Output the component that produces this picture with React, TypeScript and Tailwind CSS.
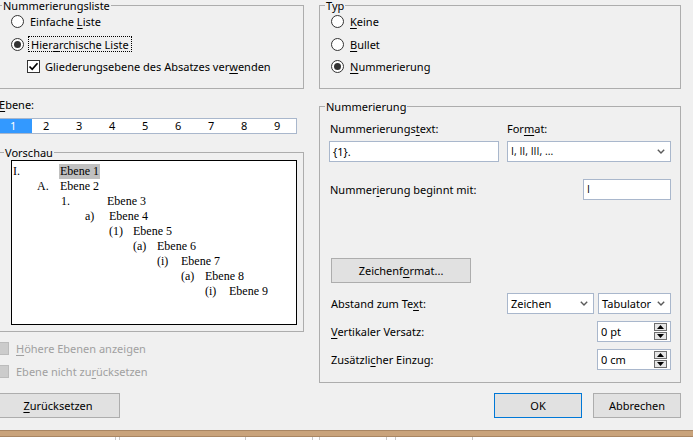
import React from "react";

function U({ children }: { children: React.ReactNode }) {
  return <span className="underline underline-offset-[2px]">{children}</span>;
}

function Radio({ checked }: { checked?: boolean }) {
  return (
    <span className="w-[13px] h-[13px] shrink-0 rounded-full border border-[#333333] bg-white flex items-center justify-center">
      {checked && <span className="w-[7px] h-[7px] rounded-full bg-[#333333]" />}
    </span>
  );
}

function Check({ checked, disabled }: { checked?: boolean; disabled?: boolean }) {
  if (disabled) {
    return <span className="w-[13px] h-[13px] shrink-0 border border-[#bcbcbc] bg-[#cccccc]" />;
  }
  return (
    <span className="w-[13px] h-[13px] shrink-0 border border-[#333333] bg-white flex items-center justify-center">
      {checked && (
        <svg width="11" height="11" viewBox="0 0 11 11">
          <path d="M1.5 5.5 L4.2 8.3 L9.5 2.2" stroke="#000" strokeWidth="1.7" fill="none" />
        </svg>
      )}
    </span>
  );
}

function Chevron() {
  return (
    <svg width="8" height="5" viewBox="0 0 8 5">
      <path d="M0.8 0.8 L4 4 L7.2 0.8" stroke="#5a5a5a" strokeWidth="1.4" fill="none" />
    </svg>
  );
}

function Select({ value, width, roman }: { value: string; width: string; roman?: boolean }) {
  return (
    <div className={`${width} h-[21px] border border-[#a9b7cc] bg-white flex items-center justify-between pl-[3px] pr-[5px]`}>
      <span className={roman ? "font-['Open_Sans',sans-serif] text-[10.5px]" : ""}>{value}</span>
      <Chevron />
    </div>
  );
}

function SpinBtn({ up }: { up?: boolean }) {
  return (
    <span className="w-[13px] h-[8px] border border-[#6e6e6e] bg-[#e6e6e6] flex items-center justify-center">
      <svg width="7" height="4" viewBox="0 0 7 4">
        <path d={up ? "M0 4 L3.5 0 L7 4 Z" : "M0 0 L3.5 4 L7 0 Z"} fill="#000" />
      </svg>
    </span>
  );
}

function Spin({ value }: { value: string }) {
  return (
    <div className="w-[74px] h-[21px] border border-[#a9b7cc] bg-white flex items-center justify-between pl-[3px] pr-[3px]">
      <span>{value}</span>
      <span className="flex flex-col gap-[1px]">
        <SpinBtn up />
        <SpinBtn />
      </span>
    </div>
  );
}

const previewRows = [
  { n: "I.", num: "pl-[1px] w-[48px]", hl: true },
  { n: "A.", num: "pl-[25px] w-[48px]" },
  { n: "1.", num: "pl-[49px] w-[95px]" },
  { n: "a)", num: "pl-[73px] w-[97px]" },
  { n: "(1)", num: "pl-[97px] w-[121px]" },
  { n: "(a)", num: "pl-[121px] w-[145px]" },
  { n: "(i)", num: "pl-[145px] w-[169px]" },
  { n: "(a)", num: "pl-[169px] w-[193px]" },
  { n: "(i)", num: "pl-[193px] w-[217px]" },
];

export default function App() {
  return (
    <div className="w-[693px] h-[440px] overflow-hidden bg-[#f0f0f0] flex flex-col text-[11px] leading-[15px] text-black font-['Noto_Sans',sans-serif]">
      <div className="h-[430px] overflow-hidden">
        <div className="-ml-[4px] -mt-[1px] w-[697px] flex gap-[15px]">
          {/* left column */}
          <div className="w-[308px] flex flex-col">
            <fieldset className="h-[90px] border border-[#adadad]">
              <legend className="ml-[5px] px-[1px] leading-[13px]">Nummerierungsliste</legend>
              <div className="flex flex-col pl-[14px]">
                <div className="mt-[1px] h-[16px] flex items-center gap-[6px]">
                  <Radio />
                  <span>
                    Einfache <U>L</U>iste
                  </span>
                </div>
                <div className="mt-[7px] h-[16px] flex items-center gap-[4px]">
                  <Radio checked />
                  <span className="h-[16px] border border-dotted border-black px-[2px] flex items-center">
                    Hier<U>a</U>rchische Liste
                  </span>
                </div>
                <div className="mt-[6px] h-[16px] flex items-center gap-[5px] pl-[16px]">
                  <Check checked />
                  <span>
                    Gliederungsebene des Absatzes ver<U>w</U>enden
                  </span>
                </div>
              </div>
            </fieldset>

            <div className="mt-[8px] ml-[3px] h-[15px]">
              <U>E</U>bene:
            </div>
            <div className="mt-[6px] ml-[2px] w-[299px] h-[16px] border border-[#a9b7cc] bg-white flex">
              {["1", "2", "3", "4", "5", "6", "7", "8", "9"].map((d, i) => (
                <span
                  key={d}
                  className={
                    i === 0
                      ? "w-[33px] h-full pl-[11px] leading-[14px] bg-[#3399ff] text-white"
                      : "w-[33px] h-full pl-[11px] leading-[14px]"
                  }
                >
                  {d}
                </span>
              ))}
            </div>

            <fieldset className="mt-[12px] h-[186px] border border-[#adadad]">
              <legend className="ml-[7px] px-[1px] leading-[13px]">Vorschau</legend>
              <div className="mt-[1px] ml-[14px] w-[286px] h-[165px] border border-black bg-white pt-[3px] text-[12px] leading-[15px] font-['Liberation_Serif',serif]">
                {previewRows.map((r, i) => (
                  <div key={i} className="flex h-[15px]">
                    <span className={r.num}>{r.n}</span>
                    <span className={r.hl ? "-ml-[1px] px-[1px] bg-[#c0c0c0]" : ""}>Ebene {i + 1}</span>
                  </div>
                ))}
              </div>
            </fieldset>

            <div className="mt-[8px] h-[16px] flex items-center gap-[7px] text-[#a0a0a0]">
              <Check disabled />
              <span>
                <U>H</U>öhere Ebenen anzeigen
              </span>
            </div>
            <div className="mt-[7px] h-[16px] flex items-center gap-[7px] text-[#a0a0a0]">
              <Check disabled />
              <span>
                Ebene nicht zu<U>r</U>ücksetzen
              </span>
            </div>

            <div className="mt-[14px] w-[124px] h-[25px] border border-[#adadad] bg-[#e1e1e1] flex items-center justify-center">
              <span>
                <U>Z</U>urücksetzen
              </span>
            </div>
          </div>

          {/* right column */}
          <div className="w-[362px] flex flex-col">
            <fieldset className="h-[90px] border border-[#adadad]">
              <legend className="ml-[5px] px-[1px] leading-[13px]">Typ</legend>
              <div className="flex flex-col pl-[11px]">
                <div className="mt-[1px] h-[16px] flex items-center gap-[6px]">
                  <Radio />
                  <span>
                    <U>K</U>eine
                  </span>
                </div>
                <div className="mt-[7px] h-[16px] flex items-center gap-[6px]">
                  <Radio />
                  <span>
                    <U>B</U>ullet
                  </span>
                </div>
                <div className="mt-[6px] h-[16px] flex items-center gap-[6px]">
                  <Radio checked />
                  <span>
                    <U>N</U>ummerierung
                  </span>
                </div>
              </div>
            </fieldset>

            <fieldset className="mt-[11px] h-[283px] border border-[#adadad]">
              <legend className="ml-[5px] px-[1px] leading-[13px]">Nummerierung</legend>
              <div className="flex flex-col px-[9px]">
                <div className="mt-[8px] h-[15px] flex gap-[8px]">
                  <span className="w-[170px] pl-[1px]">
                    Nummerierungs<U>t</U>ext:
                  </span>
                  <span>
                    For<U>m</U>at:
                  </span>
                </div>
                <div className="mt-[5px] flex gap-[8px]">
                  <div className="w-[170px] h-[21px] border border-[#a9b7cc] bg-white flex items-center pl-[3px]">
                    {"{1}."}
                  </div>
                  <Select value="I, II, III, ..." width="w-[164px]" roman />
                </div>
                <div className="mt-[17px] h-[21px] flex items-center justify-between">
                  <span className="pl-[1px]">
                    Nummer<U>i</U>erung beginnt mit:
                  </span>
                  <div className="w-[88px] h-[21px] border border-[#a9b7cc] bg-white flex items-center pl-[3px] font-['Open_Sans',sans-serif] text-[10.5px]">
                    I
                  </div>
                </div>
                <div className="mt-[58px] ml-[2px] w-[140px] h-[25px] border border-[#adadad] bg-[#e1e1e1] flex items-center justify-center">
                  <span>
                    Zeichenf<U>o</U>rmat...
                  </span>
                </div>
                <div className="mt-[10px] h-[21px] flex items-center">
                  <span className="flex-1 pl-[2px]">
                    Abstand zum Te<U>x</U>t:
                  </span>
                  <Select value="Zeichen" width="w-[87px]" />
                  <span className="w-[4px]" />
                  <Select value="Tabulator" width="w-[73px]" />
                </div>
                <div className="mt-[7px] h-[21px] flex items-center justify-between">
                  <span className="pl-[2px]">
                    <U>V</U>ertikaler Versatz:
                  </span>
                  <Spin value="0 pt" />
                </div>
                <div className="mt-[7px] h-[21px] flex items-center justify-between">
                  <span className="pl-[2px]">
                    Zusätzli<U>c</U>her Einzug:
                  </span>
                  <Spin value="0 cm" />
                </div>
              </div>
            </fieldset>

            <div className="mt-[10px] flex justify-end gap-[11px]">
              <div className="w-[88px] h-[25px] border border-[#0078d7] bg-[#e1e1e1] flex items-center justify-center">OK</div>
              <div className="w-[88px] h-[25px] border border-[#adadad] bg-[#e1e1e1] flex items-center justify-center">
                Abbrechen
              </div>
            </div>
          </div>
        </div>
      </div>
      <div className="h-[7px] bg-[#c9a37b] border-t border-b border-[#a98663]" />
      <div className="h-[3px] bg-white flex">
        <span className="ml-[115px] w-[5px] border-l border-r border-[#c8c8c8]" />
        <span className="ml-[125px] w-px bg-[#c8c8c8]" />
        <span className="ml-[66px] w-[8px] border-l border-r border-[#c8c8c8]" />
        <span className="ml-[66px] w-[10px] border-l border-r border-[#c8c8c8]" />
        <span className="ml-[76px] w-px bg-[#c8c8c8]" />
      </div>
    </div>
  );
}
